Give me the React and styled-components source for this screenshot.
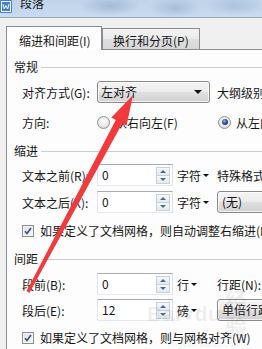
import React from "react";
import styled, { createGlobalStyle } from "styled-components";

const Global = createGlobalStyle`
  html, body { margin: 0; padding: 0; overflow: hidden; background: #f0f0f0; }
  body {
    font-family: "Noto Sans CJK SC", "Microsoft YaHei", sans-serif;
    font-size: 12px;
    color: #161616;
  }
`;

const Page = styled.div`
  position: relative;
  width: 262px;
  height: 349px;
  overflow: hidden;
  background: #f0f0f0;
`;

const TitleBar = styled.div`
  height: 17px;
  border-bottom: 1px solid #9aa9ba;
  display: flex;
  align-items: flex-start;
  gap: 8px;
  overflow: hidden;
  background:
    radial-gradient(ellipse 30px 10px at 110px 6px, rgba(150,175,205,0.7), transparent),
    radial-gradient(ellipse 26px 10px at 175px 8px, rgba(150,175,205,0.6), transparent),
    radial-gradient(ellipse 30px 10px at 235px 6px, rgba(160,185,212,0.6), transparent),
    linear-gradient(180deg, #bfd3ea 0%, #c9dbef 100%);
`;

const AppIcon = styled.svg`
  width: 12px;
  height: 13px;
  flex: none;
`;

const TitleText = styled.span`
  line-height: 16px;
  margin-top: -5px;
  font-size: 12px;
  color: #1b1b1b;
`;

const Body = styled.div`
  padding-top: 8px;
`;

const TabStrip = styled.div`
  position: relative;
  z-index: 1;
  display: flex;
  align-items: flex-start;
  height: 24px;
  margin-left: 6px;
  margin-bottom: -1px;
`;

const Tab = styled.div`
  box-sizing: border-box;
  width: ${(p) => (p.$active ? 96 : 98)}px;
  height: ${(p) => (p.$active ? 24 : 21)}px;
  margin-top: ${(p) => (p.$active ? 0 : 2)}px;
  padding-top: ${(p) => (p.$active ? 6 : 4)}px;
  padding-left: ${(p) => (p.$active ? 12 : 10)}px;
  line-height: 16px;
  white-space: nowrap;
  border: 1px solid #898c95;
  border-bottom: none;
  background: ${(p) =>
    p.$active ? "#ffffff" : "linear-gradient(180deg, #f3f3f3 0%, #ebebeb 50%, #dedede 51%, #d8d8d8 100%)"};
`;

const Panel = styled.div`
  margin-left: 6px;
  width: 320px;
  height: 300px;
  border-left: 1px solid #898c95;
  border-top: 1px solid #898c95;
  background: #fdfdfd;
  display: flex;
  flex-direction: column;
  padding-left: 7px;
  box-sizing: border-box;
`;

const SectionHeader = styled.div`
  display: flex;
  align-items: center;
  gap: 3px;
  height: 16px;
  line-height: 16px;
  margin-top: ${(p) => p.$mt}px;
  &::after {
    content: "";
    flex: 1;
    height: 1px;
    background: #c7cdd3;
  }
`;

const Row = styled.div`
  display: flex;
  align-items: center;
  height: ${(p) => p.$h || 22}px;
  margin-top: ${(p) => p.$mt}px;
  margin-left: 8px;
  white-space: nowrap;
`;

const Label = styled.span`
  width: 75px;
  flex: none;
`;

const SideLabel = styled.span`
  flex: none;
`;

const Combo = styled.div`
  box-sizing: border-box;
  width: ${(p) => p.$w}px;
  height: 22px;
  flex: none;
  display: flex;
  align-items: center;
  justify-content: space-between;
  padding: 0 7px 0 ${(p) => p.$pl || 3}px;
  margin-right: ${(p) => p.$mr || 0}px;
  border: 1px solid #8a8a8a;
  border-radius: 3px;
  box-shadow: inset 0 0 0 1px rgba(255, 255, 255, 0.7);
  background: linear-gradient(180deg, #f4f4f4 0%, #ececec 48%, #dfdfdf 52%, #d2d2d2 100%);
  line-height: 16px;
`;

const Caret = styled.span`
  width: 0;
  height: 0;
  flex: none;
  border-left: ${(p) => (p.$small ? 3 : 4)}px solid transparent;
  border-right: ${(p) => (p.$small ? 3 : 4)}px solid transparent;
  border-top: ${(p) => (p.$small ? 3 : 4)}px solid #111;
  margin-left: ${(p) => (p.$small ? 2 : 0)}px;
`;

const SpinBox = styled.div`
  box-sizing: border-box;
  width: 76px;
  height: 22px;
  flex: none;
  display: flex;
  align-items: center;
  justify-content: space-between;
  padding-left: 4px;
  padding-right: 2px;
  border: 1px solid;
  border-color: #abadb3 #dbdfe6 #e3e9ef #e2e3ea;
  background: #fff;
  line-height: 16px;
`;

const Spinner = styled.div`
  display: flex;
  flex-direction: column;
  width: 14px;
`;

const SpinButton = styled.div`
  box-sizing: border-box;
  height: 9px;
  display: flex;
  align-items: center;
  justify-content: center;
  border: 1px solid #c9d0d8;
  margin-top: ${(p) => (p.$down ? -1 : 0)}px;
  background: linear-gradient(180deg, #f6f8fb 0%, #e4eaf1 100%);
  &::before {
    content: "";
    width: 0;
    height: 0;
    border-left: 3px solid transparent;
    border-right: 3px solid transparent;
    ${(p) => (p.$down ? "border-top: 3px solid #4d6794;" : "border-bottom: 3px solid #4d6794;")}
  }
`;

const Unit = styled.span`
  box-sizing: border-box;
  width: 44px;
  flex: none;
  padding-left: 4px;
  display: flex;
  align-items: center;
`;

const RadioGroup = styled.span`
  display: flex;
  align-items: center;
  gap: 5px;
  width: ${(p) => p.$w || "auto"};
  flex: none;
`;

const Radio = styled.span`
  box-sizing: border-box;
  width: 13px;
  height: 13px;
  border-radius: 50%;
  border: 1px solid #8e8f8f;
  background: radial-gradient(circle at 50% 35%, #ffffff 0%, #e9e9e9 55%, #cfcfcf 100%);
  display: flex;
  align-items: center;
  justify-content: center;
  flex: none;
  &::after {
    content: "";
    display: ${(p) => (p.$checked ? "block" : "none")};
    width: 6px;
    height: 6px;
    border-radius: 50%;
    background: radial-gradient(circle at 40% 35%, #8fb7e6 0%, #2a5596 45%, #0c2450 100%);
  }
`;

const CheckRow = styled.div`
  display: flex;
  align-items: center;
  gap: 6px;
  height: 16px;
  line-height: 16px;
  margin-top: ${(p) => p.$mt}px;
  margin-left: 8px;
  white-space: nowrap;
`;

const CheckBox = styled.span`
  box-sizing: border-box;
  width: 12px;
  height: 12px;
  flex: none;
  border: 1px solid #8e8f8f;
  background: linear-gradient(135deg, #dde2e8 0%, #f6f7f9 100%);
  box-shadow: inset 0 0 0 1px #f4f4f4;
  display: flex;
  align-items: center;
  justify-content: center;
`;

const Overlay = styled.svg`
  position: absolute;
  left: 0;
  top: 0;
  width: 262px;
  height: 349px;
  pointer-events: none;
  z-index: 5;
`;

const Watermark = styled.div`
  position: absolute;
  left: 147px;
  top: 288px;
  z-index: 4;
  pointer-events: none;
  display: flex;
  flex-direction: column;
  align-items: center;
  color: rgba(90, 90, 90, 0.11);
`;

const WmMain = styled.div`
  display: flex;
  align-items: center;
  font-family: "Liberation Sans", "Noto Sans CJK SC", sans-serif;
  font-weight: bold;
  font-size: 21px;
  line-height: 26px;
  letter-spacing: 0.5px;
`;

const WmSub = styled.div`
  font-family: "Liberation Sans", sans-serif;
  font-size: 8px;
  line-height: 9px;
  letter-spacing: 0.5px;
`;

function Spin({ value }) {
  return (
    <SpinBox>
      <span>{value}</span>
      <Spinner>
        <SpinButton />
        <SpinButton $down />
      </Spinner>
    </SpinBox>
  );
}

function Check() {
  return (
    <CheckBox>
      <svg width="8" height="8" viewBox="0 0 8 8">
        <path d="M1 4.2 L3 6.4 L7 1" fill="none" stroke="#3b4f8c" strokeWidth="1.6" />
      </svg>
    </CheckBox>
  );
}

export default function App() {
  return (
    <Page>
      <Global />
      <TitleBar>
        <AppIcon viewBox="0 0 12 13">
          <rect x="0" y="0" width="12" height="13" rx="1" fill="#3f7fd6" />
          <rect x="1.5" y="1.5" width="9" height="10" fill="none" stroke="#ffffff" strokeWidth="1" />
          <path d="M3 4 L4.3 9 L6 5.5 L7.7 9 L9 4" fill="none" stroke="#ffffff" strokeWidth="1" />
        </AppIcon>
        <TitleText>段落</TitleText>
      </TitleBar>
      <Body>
        <TabStrip>
          <Tab $active>缩进和间距(I)</Tab>
          <Tab>换行和分页(P)</Tab>
        </TabStrip>
        <Panel>
          <SectionHeader $mt={9}>常规</SectionHeader>
          <Row $mt={6}>
            <Label>对齐方式(G):</Label>
            <Combo $w={113} $mr={7}>
              <span>左对齐</span>
              <Caret />
            </Combo>
            <SideLabel>大纲级别(O):</SideLabel>
          </Row>
          <Row $mt={11} $h={16}>
            <Label>方向:</Label>
            <RadioGroup $w="121px">
              <Radio />
              <span>从右向左(F)</span>
            </RadioGroup>
            <RadioGroup>
              <Radio $checked />
              <span>从左向右(L)</span>
            </RadioGroup>
          </Row>
          <SectionHeader $mt={13}>缩进</SectionHeader>
          <Row $mt={5}>
            <Label>文本之前(R):</Label>
            <Spin value="0" />
            <Unit>
              字符
              <Caret $small />
            </Unit>
            <SideLabel>特殊格式(S):</SideLabel>
          </Row>
          <Row $mt={5}>
            <Label>文本之后(X):</Label>
            <Spin value="0" />
            <Unit>
              字符
              <Caret $small />
            </Unit>
            <Combo $w={90} $pl={4}>
              <span>(无)</span>
              <Caret />
            </Combo>
          </Row>
          <CheckRow $mt={10}>
            <Check />
            <span>如果定义了文档网格，则自动调整右缩进(I)</span>
          </CheckRow>
          <SectionHeader $mt={12}>间距</SectionHeader>
          <Row $mt={6}>
            <Label>段前(B):</Label>
            <Spin value="0" />
            <Unit>
              行
              <Caret $small />
            </Unit>
            <SideLabel>行距(N):</SideLabel>
          </Row>
          <Row $mt={4}>
            <Label>段后(E):</Label>
            <Spin value="12" />
            <Unit>
              磅
              <Caret $small />
            </Unit>
            <Combo $w={90} $pl={4}>
              <span>单倍行距</span>
              <Caret />
            </Combo>
          </Row>
          <CheckRow $mt={9}>
            <Check />
            <span>如果定义了文档网格，则与网格对齐(W)</span>
          </CheckRow>
        </Panel>
      </Body>
      <Watermark>
        <WmMain>
          <span>Bai</span>
          <svg width="16" height="16" viewBox="0 0 16 16">
            <g fill="rgba(90,90,90,0.12)">
              <ellipse cx="4" cy="5" rx="1.8" ry="2.4" />
              <ellipse cx="8" cy="3" rx="1.8" ry="2.4" />
              <ellipse cx="12" cy="5" rx="1.8" ry="2.4" />
              <ellipse cx="8" cy="11" rx="4" ry="3.5" />
            </g>
          </svg>
          <span>du</span>
          <span style={{ marginLeft: 4 }}>经验</span>
        </WmMain>
        <WmSub>jingyan.baidu.com</WmSub>
      </Watermark>
      <Overlay viewBox="0 0 262 349">
        <polygon
          points="133,95 126.6,125.6 122.2,123.4 29.4,292.9 26.6,291.1 115.8,119.9 111.4,117.6"
          fill="#f2393b"
        />
      </Overlay>
    </Page>
  );
}
